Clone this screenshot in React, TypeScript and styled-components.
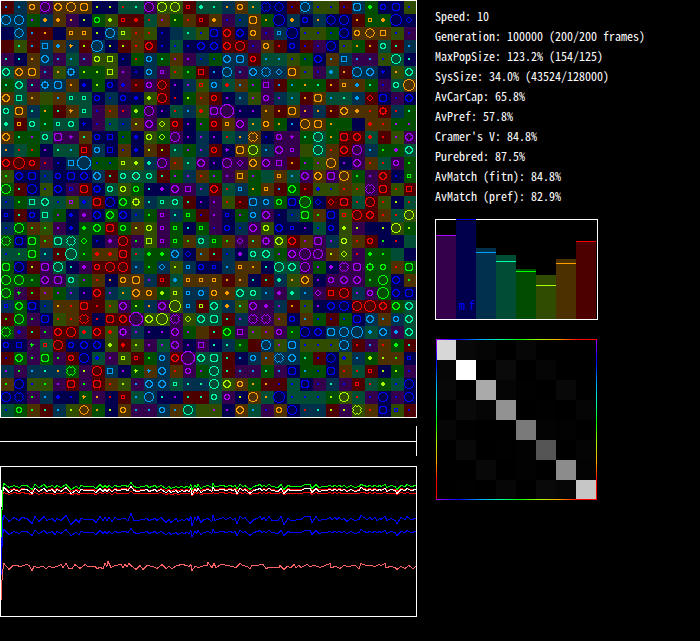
import React from 'react';
import styled, { createGlobalStyle } from 'styled-components';

const GlobalStyle = createGlobalStyle`
  body {
    margin: 0;
    background: #000;
    color: #fff;
  }
`;

const Page = styled.main`
  display: flex;
  align-items: flex-start;
  gap: 18px;
`;

const Simulation = styled.section`
  flex: 0 1 417px;
  min-width: 0;
`;

const Drawing = styled.svg`
  display: block;
  width: 100%;
  height: auto;
`;

const Timeline = styled.div`
  display: flex;
  align-items: center;
  height: 30px;
  margin: 8px 0 10px;
  border-right: 1px solid #fff;
`;

const TimelineTrack = styled.div`
  flex: 1;
  height: 1px;
  background: #fff;
`;

const Sidebar = styled.aside`
  flex: 1;
  min-width: 0;
  padding-top: 6px;
`;

const Stats = styled.ul`
  margin: 0 0 13px;
  padding: 0;
  list-style: none;
  font-family: 'Noto Sans Mono CJK JP', 'Noto Sans CJK JP', 'Liberation Mono', monospace;
  font-feature-settings: 'hwid';
  font-size: 12px;
  line-height: 20px;
`;

const Stat = styled.li`
  height: 20px;
  white-space: nowrap;
`;

const Histogram = styled(Drawing)`
  max-width: 163px;
  font-family: 'Noto Sans Mono CJK JP', 'Noto Sans CJK JP', 'Liberation Mono', monospace;
  font-feature-settings: 'hwid';
  font-size: 12px;
`;

const spectrum = '#a800ff, #0000ff 14%, #00a8ff 28%, #00ffa8 40%, #00ff00 52%, #a8ff00 64%, #ffa800 76%, #ff0000 88%';

const Matrix = styled.div`
  display: grid;
  grid-template-columns: 19px repeat(7, 20px);
  grid-template-rows: repeat(7, 20px) 19px;
  width: max-content;
  margin: 19px 0 0 1px;
  padding: 1px;
  background:
    linear-gradient(to right, ${spectrum}) top / 100% 1px no-repeat,
    linear-gradient(to right, ${spectrum}) bottom / 100% 1px no-repeat,
    linear-gradient(to bottom, ${spectrum});
`;

const MatrixCell = styled.div<{ $level: number }>`
  background: rgb(${(p) => p.$level}, ${(p) => p.$level}, ${(p) => p.$level});
`;

const DARK: Record<string, string> = {
  P: '#34004c', B: '#00004c', C: '#00304c', T: '#004c34',
  G: '#004c00', Y: '#304c00', O: '#4c3000', R: '#4c0000',
};
const BRIGHT: Record<string, string> = {
  P: '#a800ff', B: '#0000ff', C: '#00a0ff', T: '#00ffa8',
  G: '#00ff00', Y: '#a8ff00', O: '#ffa000', R: '#ff0000',
};

// Each cell: ground hue, marker hue, marker shape.
const WORLD = [
  'RC. CC. OOc PPO OOC OOO OOQ BY. BY. TR. TT. PPO YYO YYO RRs TT+ TT. CO. OOc TO. BBK BBD RB. CCO YB. YB. RB. CCQ GG+ BBc BBQ YB.',
  'CCO CCO GP. CO+ OO+ PO. BY. GGc YY+ RRs RR+ TR. OP. GY. OR. RRs OO+ PB. CB. OOQ GO. BBM CO+ BBc CO. BBD BBO RO. GOs GO+ BBM BBd',
  'BB- CCD RC. RO. BB- OOs OOs BY. CCO YYs OR. YR. BB. CC- TT. YB. BBQ RRC BBC OOc PB. CCs BBM YB. YB. GB. BBO OOc OOD OOq YB. PB.',
  'RR- YT. RC. CCq OC+ CO* RY. CCM BY. RY. OR. RRC BB. TB. BB. BBC BBC RRC RRO PB. OOc RR. BBc RB. PB. BBO YB. GO. RO. TTc RT. CC.',
  'PT. BT. OO. CCC PC. TC. PC. YYc YYq BB. GR. CCc GT. OP. PP. CB. GB. CCC CCQ RRc TC. TC. YB. GB. BBC OC. CCq PC. PC. YB. TTO BT.',
  'TTC OOC OOQ PC. YO. CCk GY. GY. YYq PP. BB. CCc PPs YR. GG. RRq BC. CCO PC. CCC CCK CCd OOQ YB. PB. TC+ RO. CCO CCC BB* YO. TTC',
  'GT. TTC PT. CCk CCQ OO. BB+ GY. BBc PB+ RR. PPc RRD BP. CP. YRs CCc TR+ OC. GP. PPq RC. GC. GO. GT. RO. OOs OC+ GT. PB. TTc OOM',
  'OOC TTq OO. YG- OC. TTs TTs BBc CB. BBc BB+ YY+ RRO BR. GY. OR. RRc BP. CC. YP. PPc CP. TC. RO. OOQ TC. TT. CC+ RRd BBQ PB. BBC',
  'TTc OOQ CT. GO. RT. OO* TTs PB. OR. PR. GY+ PPO BP. TR. CC. YR+ PPQ PPX BP. BP. OO. RO. OOQ PO. CO. RO. OOC OO+ OR. RRk CR. GT.',
  'TT+ ROs TTc GT. TTs TTc BB* PB. TB. CB. OY. PPC YYd RRc BP. GP. RRc OOs PPC TO. OOc GO. BC. OOO OOQ GO. GG- BB- OR+ OR. GP. GP.',
  'OOC GT. GP. TTc PPQ PP* OT. BBc BBq GB. BB+ YYc GYd PPO BP. CP. BP. TR. CO. OOK BB. PPc PP* GT. TTO GO. RRQ RRC TR+ RR. YP. PPC',
  'CO. TR. GR. BP. TT. TC. RRq CCc BBq OB. BB+ OY. RY. TT. GP. CP. RRc BP* OOQ YYO CC. PPC PPs YG- TTO OR. RRC PPO CC. GG. GP+ TTC',
  'RRC RRM RRc PR. BB. CCq CCX GB. GB. YYs YY+ CT+ PPO OR. TT. PPC BP. PPO PPd OOC PPC PPq RO. GP. YP. OOO BP. PPC OR. TR. PPc GG.',
  'YG. BBC BBQ CB. BBc BBQ BBC CCC RT. TTc TTC TTc RT. GP. CP. OR. GP. PP. OOq GP. TT- OOs TC. PPC OOC PPQ OOO GG. PP. RRC BB. GGs',
  'GGO RT. BBO YB. BBC PBs RRQ BBk TTc YYc GGc BT. BP+ PPC PPq CP. RRC TR. CCs GO. OOs RC. GGC RR. YB+ YB. OR. YR. PPK RRQ YR. RRq',
  'CB. GG. TTq TTC TB. YPs CB+ RRQ BBO GGC YYk CT. TTs TTc RT. BP. PP. YR. RR. CCQ CCc GGc BBQ GGM BBd RRd RRQ TR. RRO YR. BY. TR.',
  'BBs RT. BBc TTq GP. BB+ PP+ BBC GGC BBC CB. GG. PPs CT. GGs RB. PP. BBs GP. CCc PPC BB. CB. GGQ OG. BBQ YRs RRO RRC OR. TR. YYO',
  'CB. GGO OG. YG. PP. BB+ GG+ GGC RRQ GGc OY. YYc PPs GGs BT. GGs PB. BBc CB. PPC YYc BBC BBs BP. TB. BBc YY+ PY. BB- BY. YYO GY.',
  'GGK BBQ GGQ OG. TTQ TTK GGd BB. PP+ RRO PG. YYq PPs GGs OG. TTc GGs OG. PPd OT. PPk YYC RRC OP. PPQ CP. YYc OR. RRc BG. BR. TT-',
  'TB. TG. GGQ CT. RT. TTM GG. OR+ OR+ RRQ TR. GG+ GG+ CCC BBd OC. RT. CB. BP+ TTc TTC GP. PPC PPM PPO OY. YYd PR. GG+ GG. TT- BB-',
  'GGQ BBO RY. PPQ TTO BT. PP+ RRc RRO RRO CC. GG. CCd YY. CCs BBc BBs CC. OOs OO. BT. TTO TTC PPO GP. BP+ PPK PPQ GGk GGc OR. GGQ',
  'GGO GGO GG. PPC PPQ TTc GP. OR. BO. OOc OOQ CP. RRs TC+ OOs OOs OOs RO. OO. BT. RT. CT+ YO. OOC BP. PPc PPC PPC GG. GGO BBC OG.',
  'GGO PG* RG. OP. GP. CP. BP. RRC CP. TO. OOC OOc GY+ YYs CCs CCc OOc OO+ TTC TTc CC. PP+ TT+ CC. PPd RRq RRO CP. PPc GGM BBC BBQ',
  'CBs GGC BBQ CB. OO. OR. RRQ RR. YR. PPC GY. CO. PPC YYM CCs RYs TTC CO+ YT. PPC PP+ CP. RO. YB. BP. BBC BBO RRO RRM RRC GGC TTC',
  'RG. GGO PG. BBQ YR. OR. RRK BR. RRQ RRC PPX YYC YYM PPK YYd TTC TTQ RT. CP. PPK PPK OP. BBc OC. GB. RB. GB. BBQ CCC OC. CCc TTC',
  'GGK PB+ RT. PG. RRC RRO TR+ RRC YR+ PPk CP. BP. BP. PPC GP. OO- RT. GGC PPq YP. OP. PPc GG. BBO BBC CCQ CCO CCM TC+ CCC PC+ TTC',
  'BBc BBq PG* TRs RRO BBc BBC BBC YY+ RR+ YY. PP. TP. PPC BP. PPq BT. CT. GG. RR- CCO YP. CCQ YB. YB. YB. CCO RR. PC. OR. GG+ RT.',
  'RB. GGC PG. GGQ PG. RRc BBO TB+ PP. YYs RRs GG. CCc RRC PPX TTC TTQ RT. BC. CCc OC. CCK CCC GT. RB. BBD YB+ CC. GY+ OY. OG. BBs',
  'CP. PG. CC. CT. CO. GGK PY. RRO CCq BP. GY* OC* CCC OR. PPc GP. TTO RT. PC. PC. GT. PC. BBQ GC. GB. BBQ OR. TR. RRs BY. GY. PB.',
  'OG. BBO YB. YG. PP. RRQ PG. RRQ OR. YY. PC. CCC CCC TTs CT. CT. TTO YYC OOc GO. RO. RB. TB. BBQ PB. CT. PB. RRs TR. GY+ TB. BBO',
  'BBO BBK PG. CC. BB+ BB. GO* PO. BR. RRs TC. CCO BT. BP. RT. RT. TTc PPc BY. OOO TO. BBM TB. TB. TB. GY. YYO TR. PB. BBO PB. BBO',
  'TB. GGc OG. RT. CC. YY. OOD GO. BY. OOc PC. PC. CCc OC. TTO YY- YP. BP. OOC TC. PB. OOc BBO CR. CT. RY. PY. YYK OR. BBQ YBs RB.',
].map((row) => row.split(' '));

const ring = (size: number): string[] => {
  const mid = (size - 1) / 2;
  return Array.from({ length: size }, (_, y) =>
    Array.from({ length: size }, (_, x) =>
      Math.abs(Math.hypot(x - mid, y - mid) - mid) < 0.5 ? '#' : ' ',
    ).join(''),
  );
};

const SHAPES: Record<string, string[]> = {
  '-': [],
  '.': ['##', '##'],
  '+': [' ## ', '####', '####', ' ## '],
  '*': [' #  ', '####', ' ## ', ' #  '],
  s: ['####', '#  #', '#  #', '####'],
  q: ['######', '#    #', '#    #', '#    #', '#    #', '######'],
  d: ['  ##  ', ' #  # ', '#    #', '#    #', ' #  # ', '  ##  '],
  c: [' #### ', '##  ##', '#    #', '#    #', '##  ##', ' #### '],
  k: ['   ##   ', ' ###### ', ' #    # ', '##    ##', '##    ##', ' #    # ', ' ###### ', '   ##   '],
  Q: [' ###### ', '##    ##', '#      #', '#      #', '#      #', '#      #', '##    ##', ' ###### '],
  C: ['  ####  ', ' ##  ## ', '##    ##', '#      #', '#      #', '##    ##', ' ##  ## ', '  ####  '],
  D: ['    ##    ', '  ##  ##  ', ' #      # ', ' #      # ', '#        #', '#        #', ' #      # ', ' #      # ', '  ##  ##  ', '    ##    '],
  K: ['   #  #   ', '  # ## #  ', ' #      # ', '#        #', ' #      # ', ' #      # ', '#        #', ' #      # ', '  # ## #  ', '   #  #   '],
  O: ring(10),
  M: ring(12),
  X: ring(14),
};

const CELL = 13;

const markerPath = (shape: string, col: number, row: number): string => {
  const bitmap = SHAPES[shape];
  const left = 1 + col * CELL + 5 - bitmap.length / 2;
  const top = 1 + row * CELL + 6 - bitmap.length / 2;
  return bitmap
    .map((line, y) =>
      Array.from(line, (dot, x) => (dot === '#' ? `M${left + x} ${top + y}h1v1h-1z` : '')).join(''),
    )
    .join('');
};

function WorldMap() {
  return (
    <Drawing viewBox="0 0 417 418" shapeRendering="crispEdges" role="img" aria-label="World">
      {WORLD.map((row, y) =>
        row.map(([ground], x) => (
          <rect key={`${x}-${y}`} x={1 + x * CELL} y={1 + y * CELL} width={CELL} height={CELL} fill={DARK[ground]} />
        )),
      )}
      {WORLD.map((row, y) =>
        row.map(([, hue, shape], x) => (
          <path key={`${x}-${y}`} d={markerPath(shape, x, y)} fill={BRIGHT[hue]} />
        )),
      )}
      <path d="M0 0h417v418h-417zM1 1v416h415v-416z" fill="#fff" fillRule="evenodd" />
    </Drawing>
  );
}

// Turning points as x:y pairs, three units to a pixel.
const parse = (text: string, shift = 0) =>
  text.split(' ').map((pair) => {
    const [x, y] = pair.split(':').map(Number);
    return [(x + shift) / 3, y / 3] as const;
  });

const MATCH = [
  ...parse('8:297 13:283 27:303 42:290 57:300 66:291 82:293 96:309 106:286 118:302 131:286 141:300 155:292 164:303 172:292 182:300 198:284 214:310 228:295 236:304 244:293 255:297 280:295 288:305 300:286 310:300 316:290 322:300 327:290 336:302 345:291 355:296 375:292 385:298 394:277 402:298 412:300 430:295 440:293 448:300 465:293 472:300 482:291 498:306 507:297 514:306 528:294 535:303 545:295 553:300 562:294 567:300 572:288 577:313 585:290 590:300 595:287 603:305 612:297'),
  ...parse('0:292 12:301 16:283 22:298 45:290 55:297 66:290 75:297 80:292 86:307 97:288 105:294 112:290 127:309 137:295 148:293 155:288 162:297 167:290 174:298 184:287 192:298 210:300 218:287 229:311 240:292 250:298 280:296 292:288 305:288 311:305 323:287 332:299 345:295 355:297 366:291 372:297 380:291 388:295 393:290 401:297 407:293 418:301 430:293 440:300 452:297 460:284 468:290 476:295 485:290 493:295 500:291 508:298 515:293 520:297 530:287 538:300 548:293 560:298 568:309 580:290 590:296 598:287 610:297 623:293', 624),
];

const PUREBRED = [
  ...parse('8:447 13:428 26:447 40:436 50:434 60:438 82:431 88:436 95:449 102:437 115:441 130:437 137:443 148:437 160:441 172:437 182:431 188:442 198:428 207:443 217:443 226:433 240:444 255:431 265:439 285:439 291:444 300:441 308:443 314:428 320:437 325:424 332:440 345:436 362:431 370:440 376:431 382:438 388:430 394:435 408:448 420:434 428:446 440:436 460:438 471:443 485:433 497:444 508:438 517:444 530:435 545:431 562:434 567:439 572:431 577:449 585:437 598:441 612:436 622:434'),
  ...parse('0:427 8:437 12:440 17:430 23:442 40:433 60:434 72:438 84:442 95:430 105:436 117:437 126:443 133:434 145:436 165:433 173:444 182:441 212:442 217:434 229:448 236:438 248:441 258:433 265:442 272:436 280:441 297:431 305:437 320:434 335:442 350:436 365:428 370:440 383:437 396:445 407:436 420:438 440:436 453:445 460:428 475:436 490:434 500:439 512:433 520:436 530:430 535:440 548:438 560:441 568:448 580:437 592:444 604:434 614:445 623:438', 624),
];

const trace = (points: (readonly [number, number])[], mean: number, base: number, scale: number) =>
  points.map(([x, y]) => `${Math.round(x)},${Math.round(base + (y - mean) * scale) + 0.5}`).join(' ');

const SERIES = [
  { color: '#ff6464', points: trace(PUREBRED, 146, 100, 1) },
  { color: '#0000ff', points: trace(MATCH, 98.7, 66, 0.7) },
  { color: '#0000ff', points: trace(MATCH, 98.7, 53, 1) },
  { color: '#ff0000', points: trace(MATCH, 98.7, 27, 0.3) },
  { color: '#ff0000', points: trace(MATCH, 98.7, 23, 0.4) },
  { color: '#ffffff', points: trace(MATCH, 98.7, 24, 0.7) },
  { color: '#00ff00', points: trace(MATCH, 98.7, 20, 0.6) },
];

function History() {
  return (
    <Drawing viewBox="0 0 417 151" shapeRendering="crispEdges" role="img" aria-label="History">
      {SERIES.map(({ color, points }, i) => (
        <polyline key={i} points={points} fill="none" stroke={color} />
      ))}
      <path d="M1 24h1v17h-1z" fill="#fff" />
      <path d="M1 43h1v28h-1zM2 21h1v23h-1z" fill="#00ff00" />
      <path d="M1 71h1v38h-1zM2 51h1v30h-1z" fill="#0000ff" />
      <path d="M1 114h1v20h-1zM2 103h1v11h-1z" fill="#ff6464" />
      <path d="M0 0h417v151h-417zM1 1v149h415v-149z" fill="#fff" fillRule="evenodd" />
    </Drawing>
  );
}

const BARS = [
  { hue: 'P', top: 16, mark: 16 },
  { hue: 'B', top: 2, mark: 0 },
  { hue: 'C', top: 29, mark: 33 },
  { hue: 'T', top: 36, mark: 42 },
  { hue: 'G', top: 50, mark: 52 },
  { hue: 'Y', top: 56, mark: 66 },
  { hue: 'O', top: 40, mark: 44 },
  { hue: 'R', top: 22, mark: 22 },
];

function HueHistogram() {
  return (
    <Histogram viewBox="0 0 163 101" shapeRendering="crispEdges" role="img" aria-label="Hue histogram">
      <path d="M0 0h163v101h-163zM1 1v99h161v-99z" fill="#fff" fillRule="evenodd" />
      {BARS.map(({ hue, top, mark }, i) => (
        <g key={hue}>
          <rect x={1 + i * 20} y={top} width={20} height={100 - top} fill={DARK[hue]} />
          <rect x={1 + i * 20} y={mark} width={20} height={1} fill={BRIGHT[hue]} />
        </g>
      ))}
      <text x={24} y={91} fill="#0000ff">m</text>
      <text x={34} y={91} fill="#0000ff">f</text>
    </Histogram>
  );
}

const MATRIX = [
  [215, 8, 5, 0, 6, 0, 0, 0],
  [6, 255, 0, 10, 0, 5, 0, 0],
  [8, 0, 170, 5, 1, 0, 8, 0],
  [0, 9, 5, 146, 0, 1, 0, 5],
  [6, 1, 0, 0, 122, 3, 2, 0],
  [0, 8, 0, 1, 2, 85, 0, 4],
  [0, 0, 8, 0, 2, 0, 140, 3],
  [0, 1, 0, 6, 0, 9, 6, 198],
];

const STATS = [
  'Speed: 10',
  'Generation: 100000 (200/200 frames)',
  'MaxPopSize: 123.2% (154/125)',
  'SysSize: 34.0% (43524/128000)',
  'AvCarCap: 65.8%',
  'AvPref: 57.8%',
  "Cramer's V: 84.8%",
  'Purebred: 87.5%',
  'AvMatch (fitn): 84.8%',
  'AvMatch (pref): 82.9%',
];

export default function App() {
  return (
    <>
      <GlobalStyle />
      <Page>
        <Simulation>
          <WorldMap />
          <Timeline>
            <TimelineTrack />
          </Timeline>
          <History />
        </Simulation>
        <Sidebar>
          <Stats>
            {STATS.map((line) => (
              <Stat key={line}>{line}</Stat>
            ))}
          </Stats>
          <HueHistogram />
          <Matrix>
            {MATRIX.flat().map((level, i) => (
              <MatrixCell key={i} $level={level} />
            ))}
          </Matrix>
        </Sidebar>
      </Page>
    </>
  );
}
